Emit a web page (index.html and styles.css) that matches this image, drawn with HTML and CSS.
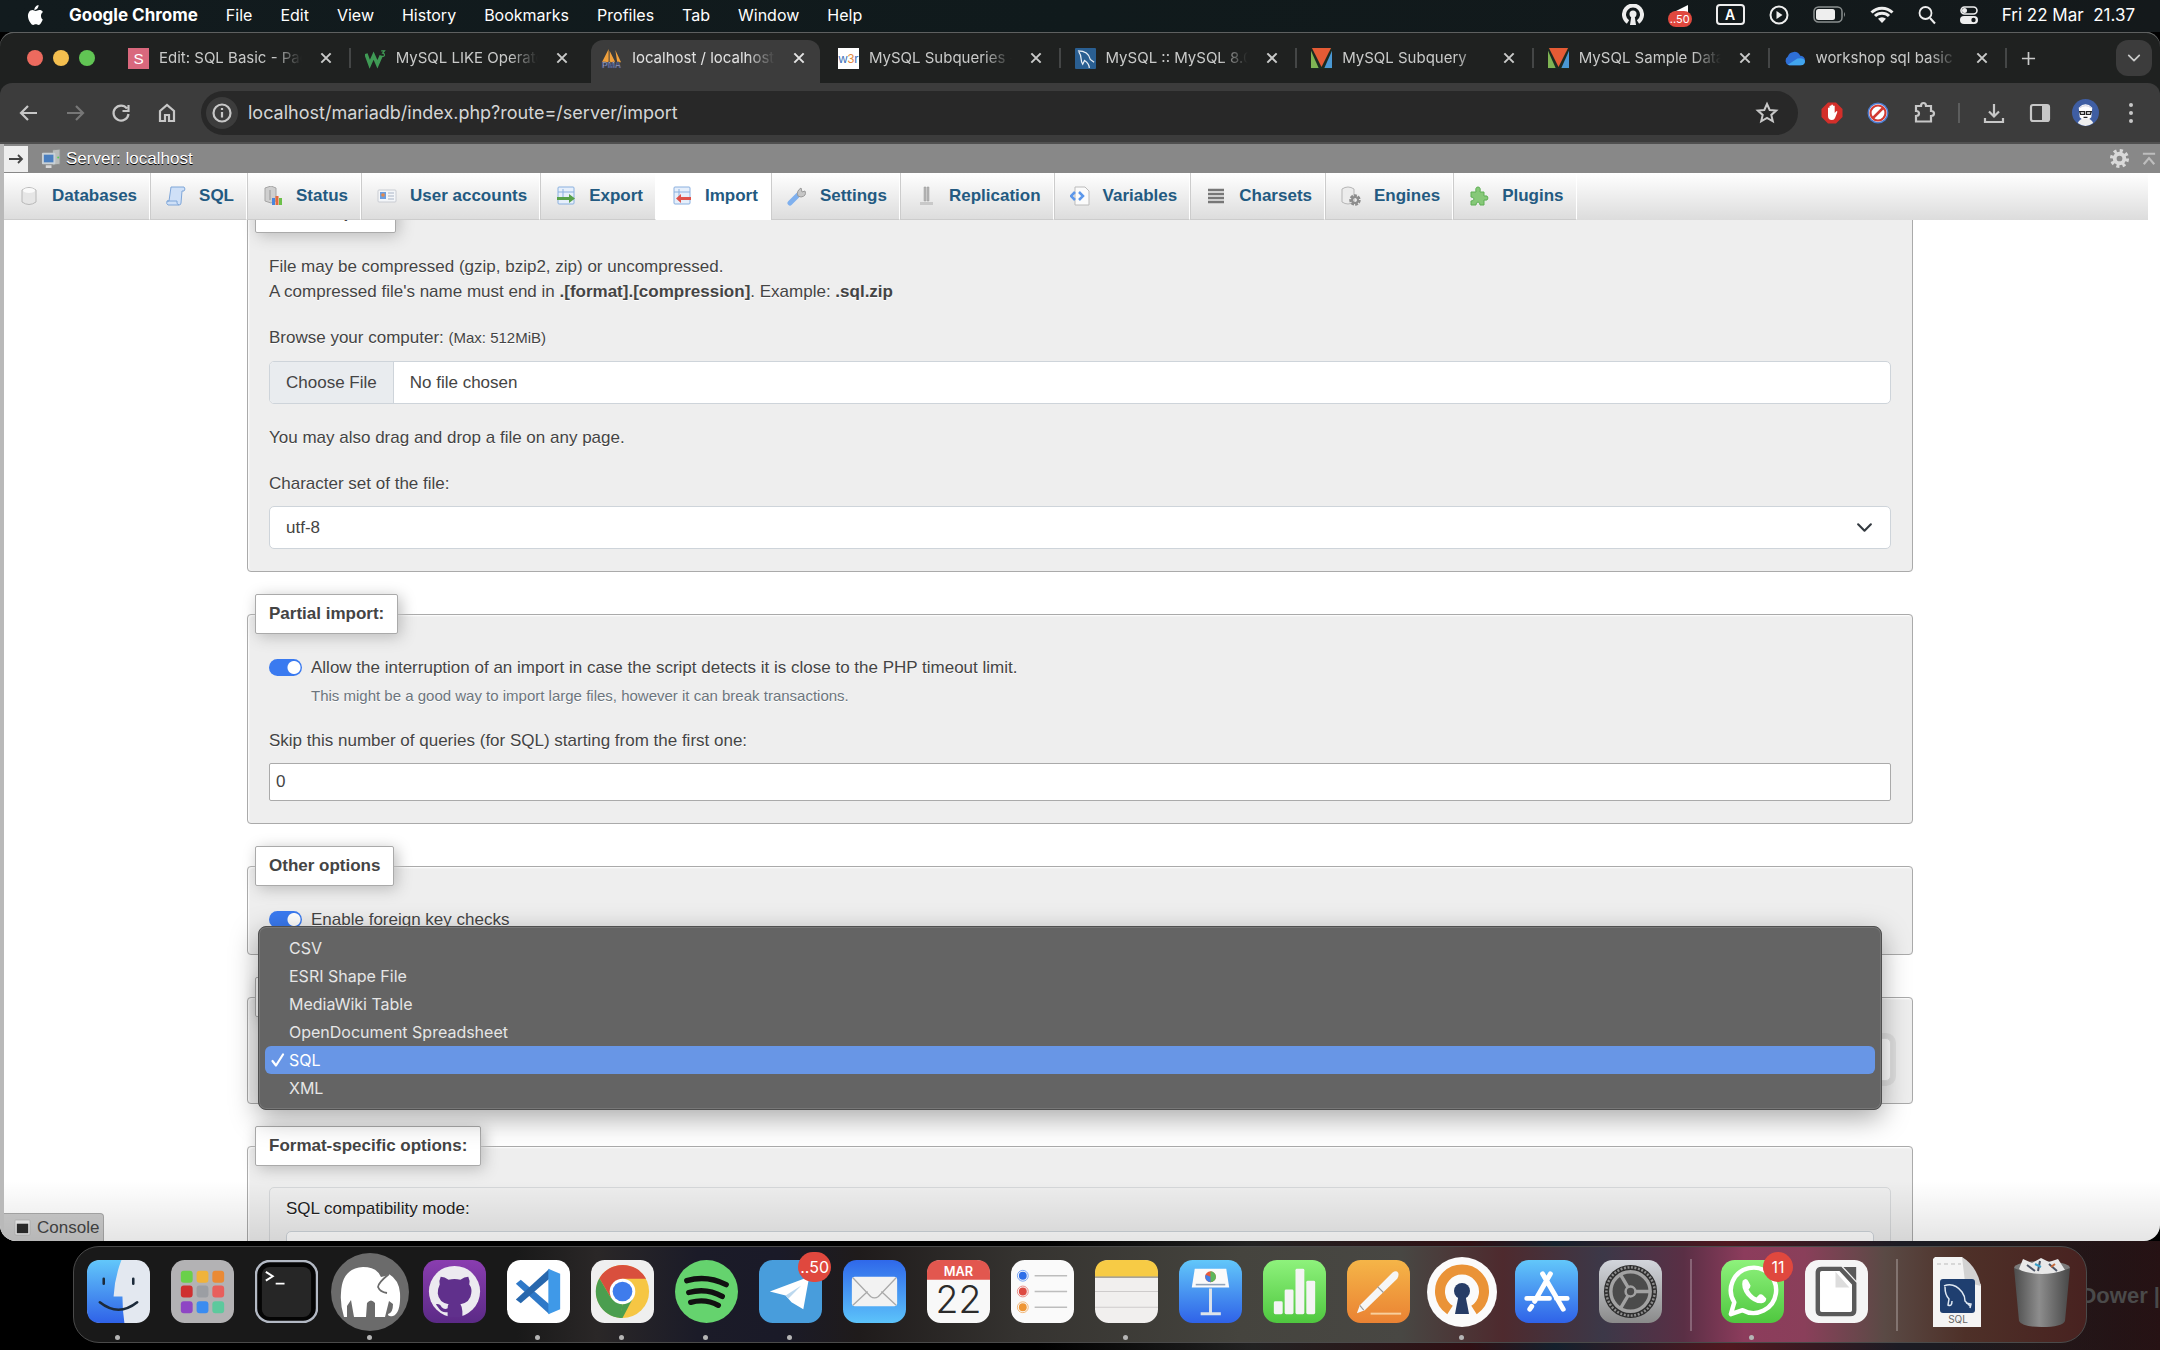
FILE: index.html
```html
<!DOCTYPE html>
<html lang="en">
<head>
<meta charset="utf-8">
<title>localhost / localhost | phpMyAdmin</title>
<link rel="stylesheet" href="styles.css">
</head>
<body>
<svg class="defs" aria-hidden="true">
  <defs>
    <symbol id="i-close" viewBox="0 0 12 12"><path d="M2 2l8 8M10 2l-8 8" stroke="currentColor" stroke-width="1.7" fill="none"/></symbol>
    <symbol id="i-tri" viewBox="0 0 22 22"><rect width="22" height="22" fill="#1c2a20"/><path d="M0 3l8 18H0z" fill="#7fb454"/><path d="M22 3v18h-8z" fill="#4a98d3"/><path d="M1 0h20l-10 20z" fill="#e55b35"/></symbol>
    <symbol id="i-chev" viewBox="0 0 16 16"><path d="M2 5l6 6 6-6" stroke="currentColor" stroke-width="2" fill="none" stroke-linecap="round" stroke-linejoin="round"/></symbol>
    <linearGradient id="g-blue" x2="0" y2="1"><stop stop-color="#62c7fa"/><stop offset="1" stop-color="#2f62e8"/></linearGradient>
    <linearGradient id="g-mail" x2="0" y2="1"><stop stop-color="#2f68ea"/><stop offset="1" stop-color="#5cc3fa"/></linearGradient>
    <linearGradient id="g-grey" x2="0" y2="1"><stop stop-color="#d3d6dc"/><stop offset="1" stop-color="#8a8a8a"/></linearGradient>
    <linearGradient id="g-green" x2="0" y2="1"><stop stop-color="#8ef27c"/><stop offset="1" stop-color="#4fc73f"/></linearGradient>
    <linearGradient id="g-orange" x2="0" y2="1"><stop stop-color="#f5b548"/><stop offset="1" stop-color="#ea8233"/></linearGradient>
    <linearGradient id="g-purple" x2="0" y2="1"><stop stop-color="#8a3db0"/><stop offset="1" stop-color="#5b2a86"/></linearGradient>
    <linearGradient id="g-trash" x2="1" y2="0"><stop stop-color="#4c4c4c"/><stop offset=".45" stop-color="#8d8d8d"/><stop offset="1" stop-color="#474747"/></linearGradient>
  </defs>
</svg>

<header class="menubar">
  <svg class="apple" viewBox="0 0 16 20"><path fill="#fff" d="M11 0c.2 1.400-.4 2.600-1.100 3.500-.8.900-1.900 1.500-3 1.400C6.800 3.600 7.400 2.500 8.100 1.700 8.900.800 10.100.100 11 0zM15.300 14.600c-.5 1.300-1.100 2.300-1.800 3.300-.7 1-1.500 2-2.600 2-1 0-1.400-.6-2.600-.6s-1.600.6-2.600.6c-1.100 0-1.900-1-2.600-2C.900 15.400-.6 10.400 1.300 7.400c.9-1.500 2.300-2.300 3.700-2.300 1.300 0 2.300.8 3.300.8.900 0 2.100-.9 3.700-.8.700 0 2.400.3 3.500 1.900-2.900 1.700-2.400 6.100-.2 7.600z"/></svg>
  <nav class="menus">
    <a href="#" class="app">Google Chrome</a><a href="#">File</a><a href="#">Edit</a><a href="#">View</a><a href="#">History</a><a href="#">Bookmarks</a><a href="#">Profiles</a><a href="#">Tab</a><a href="#">Window</a><a href="#">Help</a>
  </nav>
  <div class="status">
    <svg width="22" height="22" viewBox="0 0 22 22"><path d="M6 18a9 9 0 1 1 10 0" stroke="#eee" stroke-width="4" fill="none"/><circle cx="11" cy="10" r="3.500" fill="#eee"/><path d="M9.500 11h3l1.500 10H8z" fill="#eee"/></svg>
    <span class="tele"><svg width="24" height="24" viewBox="0 0 24 24"><path d="M2 11L20 2v12z" fill="#fff"/></svg><b>..50</b></span>
    <span class="inputsrc">A</span>
    <svg width="20" height="20" viewBox="0 0 20 20"><circle cx="10" cy="10" r="8.500" stroke="#eee" stroke-width="2" fill="none"/><path d="M7.500 6l6 4-6 4z" fill="#eee"/></svg>
    <svg width="33" height="18" viewBox="0 0 33 18"><rect x="1" y="1" width="28" height="15" rx="4.500" stroke="#8b9090" stroke-width="1.500" fill="none"/><rect x="3" y="3" width="19" height="11" rx="2.500" fill="#eee"/><path d="M31 6v5q2-2.500 0-5z" fill="#8b9090"/></svg>
    <svg width="24" height="18" viewBox="0 0 24 18"><path d="M1.500 6.500a15 15 0 0 1 21 0M5 10a10 10 0 0 1 14 0" stroke="#eee" stroke-width="3" fill="none"/><path d="M12 17l-4-4.300a6 6 0 0 1 8 0z" fill="#eee"/></svg>
    <svg width="18" height="20" viewBox="0 0 18 20"><circle cx="7.500" cy="8" r="6" stroke="#eee" stroke-width="1.800" fill="none"/><path d="M12 13l5 5.500" stroke="#eee" stroke-width="2"/></svg>
    <svg width="18" height="18" viewBox="0 0 18 18"><rect x="1" y="1" width="16" height="7" rx="3.500" fill="none" stroke="#eee" stroke-width="1.600"/><circle cx="4.500" cy="4.500" r="2.500" fill="#eee"/><rect y="10" width="18" height="8" rx="4" fill="#eee"/><circle cx="13.500" cy="14" r="2.200" fill="#14191b"/></svg>
    <time>Fri 22 Mar&nbsp; 21.37</time>
  </div>
</header>

<div class="window">
  <div class="tabstrip">
    <div class="lights"><i class="red"></i><i class="yellow"></i><i class="green"></i></div>
    <div class="tabs">
      <div class="tab"><svg viewBox="0 0 22 22"><rect width="22" height="22" fill="#d9687d"/><text x="11" y="17" text-anchor="middle" font-size="16" fill="#fff">S</text></svg><span>Edit: SQL Basic - Pages</span><button aria-label="Close"><svg><use href="#i-close"/></svg></button></div>
      <div class="tab nosep"><svg viewBox="0 0 22 22"><path d="M1 6l4 11 4-9 4 9 4-9" fill="none" stroke="#3f9a55" stroke-width="3.600"/><path d="M17 3h3.500l-2 2.300q2 .2 2 2t-3.500 1.400" fill="none" stroke="#3f9a55" stroke-width="1.200"/></svg><span>MySQL LIKE Operator</span><button aria-label="Close"><svg><use href="#i-close"/></svg></button></div>
      <div class="tab active"><svg viewBox="0 0 22 22"><path d="M8 1v14H1zM9 3l6 12H9zM15 2l6 13h-4z" fill="#f0a03c"/><text x="11" y="21" text-anchor="middle" font-size="9" font-weight="700" fill="#dfe3f4" stroke="#35406b" stroke-width=".7">PMA</text></svg><span>localhost / localhost</span><button aria-label="Close"><svg><use href="#i-close"/></svg></button></div>
      <div class="tab"><svg viewBox="0 0 22 22"><rect width="22" height="22" fill="#fff"/><text x="11" y="16" text-anchor="middle" font-size="13" fill="#3d71b8">w<tspan fill="#e58a3c">3</tspan>r</text></svg><span>MySQL Subqueries -</span><button aria-label="Close"><svg><use href="#i-close"/></svg></button></div>
      <div class="tab"><svg viewBox="0 0 22 22"><rect width="22" height="22" rx="1" fill="#2a5f92"/><path d="M3 3c8 0 12 4 13 9l4 3M4 4c4 5 1 9 4 13l2-4c3 2 5 5 5 8" fill="none" stroke="#e8eef5" stroke-width="1.300"/></svg><span>MySQL :: MySQL 8.0 Ref</span><button aria-label="Close"><svg><use href="#i-close"/></svg></button></div>
      <div class="tab"><svg><use href="#i-tri"/></svg><span>MySQL Subquery</span><button aria-label="Close"><svg><use href="#i-close"/></svg></button></div>
      <div class="tab"><svg><use href="#i-tri"/></svg><span>MySQL Sample Database</span><button aria-label="Close"><svg><use href="#i-close"/></svg></button></div>
      <div class="tab"><svg viewBox="0 0 22 22"><path d="M5 18a5 5 0 0 1-1-9 7 7 0 0 1 13-1 5 5 0 0 1 0 10z" fill="#2e6fd6"/><path d="M4 17.500L14 11q8-1 8 3.500a4 4 0 0 1-4 3.500H6z" fill="#41a5ee"/></svg><span>workshop sql basic -</span><button aria-label="Close"><svg><use href="#i-close"/></svg></button></div>
    </div>
    <button class="newtab" aria-label="New tab"><svg viewBox="0 0 16 16"><path d="M8 1v14M1 8h14" stroke="currentColor" stroke-width="1.800"/></svg></button>
    <button class="tabsearch" aria-label="Search tabs"><svg><use href="#i-chev"/></svg></button>
  </div>

  <div class="toolbar">
    <button aria-label="Back"><svg viewBox="0 0 24 24"><path d="M20 12H5M11 5l-7 7 7 7" class="ln"/></svg></button>
    <button aria-label="Forward" class="dim"><svg viewBox="0 0 24 24"><path d="M4 12h15M13 5l7 7-7 7" class="ln"/></svg></button>
    <button aria-label="Reload"><svg viewBox="0 0 24 24"><path d="M18 7.500A7.500 7.500 0 1 0 19.500 13M19.500 4v6h-6" class="ln"/></svg></button>
    <button aria-label="Home"><svg viewBox="0 0 24 24"><path d="M5 10l7-6 7 6v10h-5v-6h-4v6H5z" class="ln"/></svg></button>
    <div class="omnibox">
      <span class="info"><svg viewBox="0 0 24 24"><circle cx="12" cy="12" r="8.500" class="ln"/><path d="M12 11v5.500M12 7v2" class="ln"/></svg></span>
      <input type="text" aria-label="Address" value="localhost/mariadb/index.php?route=/server/import">
      <svg viewBox="0 0 24 24"><path d="M12 3l2.700 6 6.500.6-4.900 4.300 1.500 6.400-5.800-3.400-5.800 3.400 1.500-6.400L2.800 9.600l6.500-.6z" class="ln thin"/></svg>
    </div>
    <button aria-label="Blocker"><svg viewBox="0 0 24 24"><path d="M8 1.500h8L22.500 8v8L16 22.500H8L1.500 16V8z" fill="#d32f2a"/><path d="M8 12V7q1-1 1.500 0V5q1-1 1.700 0V4q1-1 1.800 0v1q1-1 1.700 0v7l1.800-2q1.500 0 .5 2l-2 5q-.6 2-3 2-4 0-4-4z" fill="#fff"/></svg></button>
    <button aria-label="Ad filter"><svg viewBox="0 0 24 24"><circle cx="12" cy="12" r="10.500" fill="#4c7bd0"/><circle cx="12" cy="12" r="9" fill="#fff"/><circle cx="12" cy="12" r="7.500" fill="none" stroke="#d13a33" stroke-width="2.200"/><path d="M7 17L17 7" stroke="#d13a33" stroke-width="2.500"/></svg></button>
    <button aria-label="Extensions"><svg viewBox="0 0 24 24"><path d="M4 5h5q0-3 2.500-3T14 5h5v5q3 0 3 2.500T19 15v5.500H4V15q3 0 3-2.500T4 10z" class="ln"/></svg></button>
    <i class="rule"></i>
    <button aria-label="Downloads"><svg viewBox="0 0 24 24"><path d="M12 3v12M7 10.500l5 5 5-5M3 17v4h18v-4" class="ln"/></svg></button>
    <button aria-label="Side panel"><svg viewBox="0 0 24 24"><rect x="3" y="4" width="18" height="16" rx="2" class="ln"/><path d="M14 4h7v16h-7z" fill="currentColor"/></svg></button>
    <button aria-label="Profile"><svg class="avatar" viewBox="0 0 28 28"><circle cx="14" cy="14" r="14" fill="#3f5ea3"/><path d="M7 9q7-7 14 0l-1 10q-6 7-12 0z" fill="#fff"/><path d="M8 9q6-4 12 0" stroke="#ccd" fill="none"/><path d="M8 13h5v3H9zM15 13h5l-1 3h-4zM12 19h4" stroke="#222" stroke-width="1.300" fill="none"/><path d="M6 25q2-5 8-5t8 5q-8 6-16 0z" fill="#eee"/></svg></button>
    <button aria-label="Menu"><svg viewBox="0 0 24 24" fill="currentColor"><circle cx="12" cy="4" r="2"/><circle cx="12" cy="12" r="2"/><circle cx="12" cy="20" r="2"/></svg></button>
  </div>

  <div class="page">
    <div class="server">
      <button class="expand" aria-label="Show panel"><svg viewBox="0 0 16 12"><path d="M1 6h13M10 2l4 4-4 4" fill="none" stroke="#444" stroke-width="1.800"/></svg></button>
      <svg viewBox="0 0 22 22"><path d="M12 2l8-1v16l-8 1z" fill="#b9bcbb" stroke="#8a8d8c"/><rect x="1" y="5" width="14" height="12" rx="1" fill="#c9d1d6"/><rect x="3" y="7" width="10" height="8" fill="#4a7fc0"/><path d="M5 18h6v3H5z" fill="#d8d8d8"/><circle cx="18" cy="10" r="1" fill="#5c5"/></svg>
      <a href="#">Server: localhost</a>
      <svg class="gear" viewBox="0 0 22 22"><circle cx="11" cy="11" r="8" fill="none" stroke="#d9d9d9" stroke-width="4" stroke-dasharray="3.140 3.140"/><circle cx="11" cy="11" r="5" fill="none" stroke="#d9d9d9" stroke-width="4"/></svg>
      <svg class="totop" viewBox="0 0 16 16"><path d="M1 2h14M2 14l6-7 6 7" fill="none" stroke="#bdbdbd" stroke-width="2.500"/></svg>
    </div>
    <nav class="pmatabs">
      <a href="#"><svg viewBox="0 0 20 20"><path d="M3 4q7-5 14 0v12q-7 5-14 0z" fill="#e6e6e6" stroke="#b8b8b8"/><ellipse cx="10" cy="4.500" rx="6" ry="2.500" fill="#fafafa"/></svg>Databases</a>
      <a href="#"><svg viewBox="0 0 20 20"><path d="M5 1h13q2 2 0 4h-2l-1 12q0 2-2 2H2q-2-1-1-4h2z" fill="#cfe0f7" stroke="#7fa6d8"/><path d="M1 15h10q-1 3 2 4" fill="none" stroke="#7fa6d8"/></svg>SQL</a>
      <a href="#"><svg viewBox="0 0 20 20"><path d="M2 2l6-2 5 2v13l-5 2-6-2z" fill="#cfcfcf" stroke="#a5a5a5"/><path d="M7 4v10" stroke="#999"/><path d="M9 12h3v7H9z" fill="#4a86dd"/><path d="M12.500 10h3v9h-3z" fill="#e56a3c"/><path d="M16 12h3v7h-3z" fill="#6cc04a"/></svg>Status</a>
      <a href="#"><svg viewBox="0 0 20 20"><rect x="1" y="4" width="18" height="12" rx="1" fill="#f4f6f9" stroke="#c9ccd2"/><rect x="3" y="6" width="6" height="7" fill="#6c9ee0"/><circle cx="6" cy="9" r="1.800" fill="#e58a4c"/><path d="M11 7h6M11 10h6M11 13h6" stroke="#a9b4c6"/></svg>User accounts</a>
      <a href="#"><svg viewBox="0 0 20 20"><rect x="2" y="1" width="16" height="17" rx="1" fill="#e6effb" stroke="#8ab0df"/><path d="M2 6h16M7 3v8" stroke="#8ab0df"/><path d="M1 11h12V8l6 4.500-6 4.500v-3H1z" fill="#58a24a"/></svg>Export</a>
      <a href="#" class="on"><svg viewBox="0 0 20 20"><rect x="2" y="1" width="16" height="17" rx="1" fill="#e6effb" stroke="#8ab0df"/><path d="M2 6h16M7 3v8" stroke="#8ab0df"/><path d="M19 11H9V8l-5 4.500L9 17v-3h10z" fill="#e0524a"/></svg>Import</a>
      <a href="#"><svg viewBox="0 0 20 20"><path d="M3 17L11 9" stroke="#7fb0ee" stroke-width="5" stroke-linecap="round"/><path d="M11 10q-2-5 3-8l1 4 3-1q2 5-4 6z" fill="#c6c6c6" stroke="#999"/></svg>Settings</a>
      <a href="#"><svg viewBox="0 0 20 20"><path d="M8 1h2v14H8zM11 1h2v14h-2z" fill="#b7b7b7" stroke="#9a9a9a" stroke-width=".5"/><path d="M4 16h13v3H4z" fill="#c9c9c9"/></svg>Replication</a>
      <a href="#"><svg viewBox="0 0 20 20"><path d="M5 1h10l4 4v14H5z" fill="#fbfbfb" stroke="#bbb"/><path d="M5 6l-4 4 4 4M9 6l4 4-4 4" stroke="#5c97ea" stroke-width="2.500" fill="none"/></svg>Variables</a>
      <a href="#"><svg viewBox="0 0 20 20"><path d="M2 4h16M2 8h16M2 12h16M2 16h16" stroke="#777" stroke-width="2.600"/></svg>Charsets</a>
      <a href="#"><svg viewBox="0 0 20 20"><path d="M1 3q6-4 12 0v13q-6 4-12 0z" fill="#ececec" stroke="#b5b5b5"/><circle cx="14" cy="14" r="4" fill="none" stroke="#8d8d8d" stroke-width="3.500" stroke-dasharray="2.500 1"/><circle cx="14" cy="14" r="3" fill="none" stroke="#8d8d8d" stroke-width="2"/></svg>Engines</a>
      <a href="#"><svg viewBox="0 0 20 20"><path d="M2 6h5q-1-5 2-5t2 5h4v4q4-1 4 2t-4 2v5h-4q0-3-2-3t-2 3H2v-4q3 0 3-2t-3-2z" fill="#86c878" stroke="#5faf55"/></svg>Plugins</a>
    </nav>

    <main>
      <form class="content">
        <fieldset class="card">
          <legend>File to import:</legend>
          <p>File may be compressed (gzip, bzip2, zip) or uncompressed.<br>A compressed file's name must end in <b>.[format].[compression]</b>. Example: <b>.sql.zip</b></p>
          <label for="file">Browse your computer: <small>(Max: 512MiB)</small></label>
          <input type="file" id="file" class="box">
          <p>You may also drag and drop a file on any page.</p>
          <label for="charset">Character set of the file:</label>
          <div class="selectwrap"><select id="charset" class="box"><option>utf-8</option></select><svg><use href="#i-chev"/></svg></div>
        </fieldset>
        <fieldset class="card">
          <legend>Partial import:</legend>
          <div class="switch"><input type="checkbox" id="interrupt" checked><label for="interrupt">Allow the interruption of an import in case the script detects it is close to the PHP timeout limit.</label></div>
          <div class="help">This might be a good way to import large files, however it can break transactions.</div>
          <label for="skip">Skip this number of queries (for SQL) starting from the first one:</label>
          <input type="text" id="skip" class="number" value="0">
        </fieldset>
        <fieldset class="card">
          <legend>Other options</legend>
          <div class="switch"><input type="checkbox" id="fk" checked><label for="fk">Enable foreign key checks</label></div>
        </fieldset>
        <fieldset class="card format">
          <legend>Format:</legend>
          <select class="box focus" aria-label="Format"><option>SQL</option></select>
          <ul class="popup" role="listbox" aria-label="Format">
            <li role="option">CSV</li>
            <li role="option">ESRI Shape File</li>
            <li role="option">MediaWiki Table</li>
            <li role="option">OpenDocument Spreadsheet</li>
            <li role="option" aria-selected="true"><svg viewBox="0 0 14 14"><path d="M1.500 8l3.500 4.500L12 1.500" fill="none" stroke="#fff" stroke-width="2.200" stroke-linecap="round" stroke-linejoin="round"/></svg>SQL</li>
            <li role="option">XML</li>
          </ul>
        </fieldset>
        <fieldset class="card">
          <legend>Format-specific options:</legend>
          <div class="inner">
            <label for="compat">SQL compatibility mode:</label>
            <select id="compat" class="box"><option>NONE</option></select>
          </div>
        </fieldset>
      </form>
      <button class="console"><svg viewBox="0 0 18 18"><rect x="1" y="1" width="16" height="16" rx="1" fill="#eee" stroke="#bbb"/><rect x="3" y="5" width="12" height="10" fill="#2c2c2c"/></svg>Console</button>
    </main>
  </div>
</div>

<footer class="desktop">
  <span class="wall">Dower |</span>
  <div class="dock">
    <a href="#" class="run" aria-label="Finder"><svg viewBox="0 0 64 64"><rect width="64" height="64" rx="14" fill="#e3e8f0"/><path d="M14 0h21q-7 18-8 37h9q0 14 2 27H14Q0 64 0 50V14Q0 0 14 0z" fill="url(#g-blue)"/><path d="M17 19v5M47 19v5M13 43q19 15 38 0" stroke="#1c2a3a" stroke-width="2.600" fill="none" stroke-linecap="round"/></svg></a>
    <a href="#" aria-label="Launchpad"><svg viewBox="0 0 64 64"><rect width="64" height="64" rx="14" fill="#b3b2b4"/><rect x="10" y="11" width="12" height="12" rx="3" fill="#6ad04a"/><rect x="26" y="11" width="12" height="12" rx="3" fill="#f0b33a"/><rect x="42" y="11" width="12" height="12" rx="3" fill="#ea8a35"/><rect x="10" y="26" width="12" height="12" rx="3" fill="#cf3030"/><rect x="26" y="26" width="12" height="12" rx="3" fill="#9b9ea3"/><rect x="42" y="26" width="12" height="12" rx="3" fill="#e85f5c"/><rect x="10" y="42" width="12" height="12" rx="3" fill="#8e46c4"/><rect x="26" y="42" width="12" height="12" rx="3" fill="#3a8cf0"/><rect x="42" y="42" width="12" height="12" rx="3" fill="#5dc99d"/></svg></a>
    <a href="#" aria-label="Terminal"><svg viewBox="0 0 64 64"><rect x="1" y="1" width="62" height="62" rx="14" fill="#050505" stroke="#b3b9c4" stroke-width="2.500"/><rect x="7" y="7" width="50" height="51" rx="8" fill="#262626"/><path d="M11 12l7 4.500-7 4.500M21 24h9" stroke="#fff" stroke-width="2" fill="none"/></svg></a>
    <a href="#" class="run round" aria-label="TablePlus"><svg viewBox="0 0 78 78"><circle cx="39" cy="39" r="39" fill="#6b6b6b"/><path d="M10 40Q11 15 32 14q14 0 18 10 4 0 8-3 10 6 11 19 1 20-7 23-5 1-5-2 5-1 5-10l-4-3-4 16H44V50q-4-5-8 0l-1 14H23l-3-17-4 6v11h-3Q9 52 10 40z" fill="#fff"/><path d="M58 21q-11 9-11 13 2 5 9 6" fill="none" stroke="#6b6b6b" stroke-width="1.800"/></svg></a>
    <a href="#" aria-label="GitHub Desktop"><svg viewBox="0 0 64 64"><rect width="64" height="64" rx="14" fill="url(#g-purple)"/><circle cx="32" cy="32" r="26" fill="#eceaf0"/><path d="M18 17q4 0 8 3 6-1.500 12 0 4-3 8-3 2 4 1 8 3 4 2 9-1 9-11 11 2 3 2 7v6H25v-5q-6 1-9-4l-3-4q4-1 6 3 3 3 6 1 0-3 1-4-10-2-11-11 0-5 2-9-1-4 1-8z" fill="#60308c"/></svg></a>
    <a href="#" class="run" aria-label="Visual Studio Code"><svg viewBox="0 0 64 64"><rect width="64" height="64" rx="14" fill="#fff"/><path d="M9 24l5-4 29 25v10z" fill="#2f79c8"/><path d="M9 40l5 4 29-25V9z" fill="#2767ad"/><path d="M42 9l12 5v36l-12 5z" fill="#3f99e8"/></svg></a>
    <a href="#" class="run" aria-label="Google Chrome"><svg viewBox="0 0 64 64"><rect width="64" height="64" rx="14" fill="#efefef"/><circle cx="32" cy="32" r="27" fill="#f6c644"/><path d="M32 5a27 27 0 0 1 24 14H32L20 38 8.500 18.500A27 27 0 0 1 32 5z" fill="#d94f3d"/><path d="M8.500 18.500L20 38l12 7-2 14A27 27 0 0 1 8.500 18.500z" fill="#4b9e4f"/><path d="M32 45l11-7-11 21h-3z" fill="#4b9e4f"/><circle cx="32" cy="32" r="13" fill="#fff"/><circle cx="32" cy="32" r="10" fill="#3f7cec"/></svg></a>
    <a href="#" class="run" aria-label="Spotify"><svg viewBox="0 0 64 64"><circle cx="32" cy="32" r="32" fill="#65d36e"/><path d="M12 21q20-6 40 4M14 33q18-5 34 4M16 43q15-4 28 3" stroke="#111" stroke-width="5.500" fill="none" stroke-linecap="round"/></svg></a>
    <a href="#" class="run" aria-label="Telegram"><svg viewBox="0 0 64 64"><rect width="64" height="64" rx="14" fill="#489ddc"/><path d="M11 32L51 17 45 50 33 43 27 36z" fill="#fff"/><path d="M27 36l16-10-13 13" fill="#bcd8ee"/></svg><b>..50</b></a>
    <a href="#" aria-label="Mail"><svg viewBox="0 0 64 64"><rect width="64" height="64" rx="14" fill="url(#g-mail)"/><rect x="9" y="17" width="46" height="30" rx="3" fill="#f2f2f2"/><path d="M10 18l18 19q4 3 8 0l18-19M10 46l15-14M54 46L39 32" stroke="#a9a9a9" stroke-width="1.300" fill="none"/></svg></a>
    <a href="#" aria-label="Calendar"><svg viewBox="0 0 64 64"><rect width="64" height="64" rx="14" fill="#f8f8f8"/><path d="M0 20v-6Q0 0 14 0h36q14 0 14 14v6z" fill="#e2574f"/><text x="32" y="16" text-anchor="middle" font-size="13" font-weight="600" fill="#fff">MAR</text><text x="32" y="54" text-anchor="middle" font-size="38" font-weight="300" fill="#2b2b2b">22</text></svg></a>
    <a href="#" aria-label="Reminders"><svg viewBox="0 0 64 64"><rect width="64" height="64" rx="14" fill="#fafafa"/><circle cx="12" cy="16" r="4" fill="#2f6fe8"/><circle cx="12" cy="32" r="4" fill="#dd4a42"/><circle cx="12" cy="48" r="4" fill="#ee9636"/><circle cx="12" cy="16" r="5.500" fill="none" stroke="#7ba5f2"/><circle cx="12" cy="32" r="5.500" fill="none" stroke="#ea8a84"/><circle cx="12" cy="48" r="5.500" fill="none" stroke="#f2b87a"/><path d="M24 16h33M24 32h33M24 48h33" stroke="#bdbdbd" stroke-width="1.300"/></svg></a>
    <a href="#" class="run" aria-label="Notes"><svg viewBox="0 0 64 64"><rect width="64" height="64" rx="14" fill="#f1efee"/><path d="M0 17v-3Q0 0 14 0h36q14 0 14 14v3z" fill="#f7cb45"/><path d="M0 17.500h64" stroke="#8f8b7e" stroke-width="1.300"/><path d="M0 32h64M0 48h64" stroke="#cdcaca"/></svg></a>
    <a href="#" aria-label="Keynote"><svg viewBox="0 0 64 64"><rect width="64" height="64" rx="14" fill="url(#g-blue)"/><path d="M16 9h32l3 19H13z" fill="#fafafa"/><path d="M17 25h30" stroke="#8fa3bb" stroke-width="1.600"/><circle cx="32" cy="17" r="5.500" fill="#e5593c"/><path d="M32 17V11.500a5.500 5.500 0 0 1 0 11z" fill="#5bb75b"/><path d="M32 17v5.500A5.500 5.500 0 0 1 27 15z" fill="#3f7fe8"/><path d="M30.500 29h3v24h9v3H22v-3h8.500z" fill="#dde3ea"/></svg></a>
    <a href="#" aria-label="Numbers"><svg viewBox="0 0 64 64"><rect width="64" height="64" rx="14" fill="url(#g-green)"/><rect x="11" y="42" width="9" height="13" rx="1.500" fill="#f4f4f4"/><rect x="22" y="30" width="9" height="25" rx="1.500" fill="#f4f4f4"/><rect x="33" y="9" width="9" height="46" rx="1.500" fill="#f4f4f4"/><rect x="44" y="21" width="9" height="34" rx="1.500" fill="#f4f4f4"/></svg></a>
    <a href="#" aria-label="Pages"><svg viewBox="0 0 64 64"><rect width="64" height="64" rx="14" fill="url(#g-orange)"/><path d="M24 54.500h31" stroke="#f8cf9c" stroke-width="2"/><path d="M10 54l3-8 33-33q4-3 6 0 1 3-1 6L18 51z" fill="#f6f6f6"/><path d="M31 27l6 6M13 46l4 5" stroke="#999" stroke-width="1.200"/></svg></a>
    <a href="#" class="run big" aria-label="OpenVPN"><svg viewBox="0 0 70 70"><circle cx="35" cy="35" r="35" fill="#fbfbfb"/><path d="M23 53a22 22 0 1 1 24 0" fill="none" stroke="#ea9337" stroke-width="10"/><circle cx="35" cy="34" r="8" fill="#263c66"/><path d="M32 36h6l4 21H28z" fill="#263c66"/></svg></a>
    <a href="#" aria-label="App Store"><svg viewBox="0 0 64 64"><rect width="64" height="64" rx="14" fill="url(#g-blue)"/><path d="M36 14L20 42M28 14l21 36M12 39h23M42 39h11M17 47l-2 3" stroke="#fff" stroke-width="5" fill="none" stroke-linecap="round"/></svg></a>
    <a href="#" aria-label="System Settings"><svg viewBox="0 0 64 64"><rect width="64" height="64" rx="14" fill="url(#g-grey)"/><circle cx="32" cy="32" r="27" fill="#2e2e2e"/><circle cx="32" cy="32" r="24.500" fill="none" stroke="#8d8d8d" stroke-width="2.500" stroke-dasharray="2 1.600"/><circle cx="32" cy="32" r="20" fill="#4b4b4b" stroke="#a2a2a2" stroke-width="3.500"/><path d="M32 32h19M32 32l-10-17M32 32l-10 17" stroke="#a2a2a2" stroke-width="3.500"/><circle cx="32" cy="32" r="5" fill="#4b4b4b" stroke="#a2a2a2" stroke-width="2.500"/></svg></a>
    <i class="sep"></i>
    <a href="#" class="run" aria-label="WhatsApp"><svg viewBox="0 0 64 64"><rect width="64" height="64" rx="14" fill="url(#g-green)"/><path d="M10 55l3.500-12A23 23 0 1 1 22 51z" fill="none" stroke="#fff" stroke-width="4.500" stroke-linejoin="round"/><path d="M22 21q4-4 6 1l2 4q0 2-2 4 3 6 8 8l3-3q2-1 4 1l3 3q0 4-5 5-8 0-15-8-6-8-4-15z" fill="#fff"/></svg><b>11</b></a>
    <a href="#" aria-label="LibreOffice"><svg viewBox="0 0 64 64"><rect width="64" height="64" rx="14" fill="#f5f5f5"/><path d="M17 9h19l14 15v27q0 4-4 4H17q-4 0-4-4V13q0-4 4-4z" fill="#fff" stroke="#5a5a5a" stroke-width="4.500"/><path d="M39 7h13v14z" fill="#5a5a5a"/><path d="M31 12l14 16H31z" fill="#ddd"/></svg></a>
    <i class="sep"></i>
    <a href="#" class="big" aria-label="SQL file"><svg viewBox="0 0 70 70"><path d="M12 0h27l19 28v42H10V2z" fill="#f4f4f4"/><path d="M39 0l3 25 16 4q-4-20-19-29z" fill="#d2d2d2"/><path d="M14 7h24" stroke="#bbb" stroke-dasharray="4 3"/><rect x="17" y="22" width="35" height="34" rx="3" fill="#1f3f70"/><path d="M21 29q10-4 18 6 3 4 3 9l5 5M22 30q0 8 4 12l-1 6q4 2 4-4M43 46l5 1-1 4" stroke="#dfe8f2" stroke-width="1.500" fill="none"/><text x="35" y="66" text-anchor="middle" font-size="10" fill="#666">SQL</text></svg></a>
    <a href="#" class="big" aria-label="Trash"><svg viewBox="0 0 70 70"><ellipse cx="35" cy="11" rx="28" ry="7" fill="#7a7a7a"/><path d="M12 12L16 2l9 4 9-5 8 4 9-3 7 11-10 5H20z" fill="#e8e8e8"/><path d="M20 8l8 6M33 4l-2 10M42 7l8 7" stroke="#4c5566" stroke-width="2"/><path d="M28 7l6 3" stroke="#3ba0c9" stroke-width="2"/><path d="M44 10l4-3" stroke="#c46a3c" stroke-width="2"/><path d="M7 11q28 12 56 0l-5 53q-3 6-23 6t-23-6z" fill="url(#g-trash)"/></svg></a>
  </div>
</footer>
</body>
</html>
```
FILE: styles.css
```css
* { box-sizing: border-box; }
html, body { height: 100%; }
body {
  margin: 0;
  display: flex;
  flex-direction: column;
  overflow: hidden;
  background: #000;
  color: #444;
  font: 17px/25px "Liberation Sans", Arial, sans-serif;
}
a { color: inherit; text-decoration: none; }
button { border: 0; padding: 0; background: none; color: inherit; font: inherit; }
svg { display: block; flex: none; }
.defs { position: absolute; width: 0; height: 0; }
.ln { fill: none; stroke: currentColor; stroke-width: 2.2; }
.thin { stroke-width: 2; }

/* macOS menu bar */
.menubar {
  flex: none;
  height: 32px;
  display: flex;
  align-items: center;
  padding: 0 25px 3px 27px;
  background: linear-gradient(90deg, #121b1e, #101a1c 50%, #14191b);
  color: #fff;
  font: 16px/20px Inter, sans-serif;
}
.apple { width: 17px; height: 20px; margin-right: 25px; }
.menus { display: flex; gap: 28px; flex: 1; }
.app, time { font-size: 17px; }
.app { font-weight: 700; }
.status { display: flex; align-items: center; gap: 24px; }
.tele { position: relative; }
.tele b {
  position: absolute;
  top: 8px;
  left: 0;
  width: 24px;
  height: 16px;
  border-radius: 8px;
  background: #e0483e;
  font: 11px/16px Inter, sans-serif;
  text-align: center;
}
.inputsrc {
  width: 29px;
  height: 21px;
  border: 2px solid #eee;
  border-radius: 4px;
  font: 600 14px/17px Inter, sans-serif;
  text-align: center;
}

/* browser window */
.window {
  flex: 1;
  min-height: 0;
  display: flex;
  flex-direction: column;
  overflow: hidden;
  border-radius: 14px 14px 16px 16px;
  background: #1f2120;
  box-shadow: inset 0 1px 0 #6a6c6c;
}
.tabstrip {
  flex: none;
  height: 51px;
  display: flex;
  align-items: center;
  padding-right: 8px;
  border-top: 1px solid #5e6060;
  color: #c9cac9;
  font: 15px/20px Inter, sans-serif;
}
.lights { width: 114px; display: flex; gap: 10px; padding-left: 27px; }
.lights i { width: 16px; height: 16px; border-radius: 50%; }
.red { background: #ec6a5e; }
.yellow { background: #f4bf4f; }
.green { background: #61c554; }
.tabs { flex: 1; min-width: 0; height: 50px; display: flex; }
.tab {
  position: relative;
  flex: 1 1 0;
  min-width: 0;
  display: flex;
  align-items: center;
  padding: 0 18px 0 14px;
}
.tab > svg { width: 21px; height: 21px; margin-right: 10px; font-family: "Liberation Sans", sans-serif; }
.tab span {
  flex: 1;
  min-width: 0;
  overflow: hidden;
  white-space: nowrap;
  -webkit-mask-image: linear-gradient(90deg, #000 80%, transparent);
  mask-image: linear-gradient(90deg, #000 80%, transparent);
}
.tab button { margin-left: 17px; }
.tab button svg { width: 14px; height: 14px; }
.tab:not(.active):not(.nosep)::after {
  content: "";
  position: absolute;
  right: 0;
  top: 15px;
  width: 2px;
  height: 20px;
  background: #444646;
}
.active { color: #e3e3e3; }
.active::before {
  content: "";
  position: absolute;
  z-index: -1;
  inset: 7px 4px 0;
  border-radius: 12px 12px 0 0;
  background: #3c3c3c;
}
.tabs, .active { isolation: isolate; }
.newtab { width: 43px; display: grid; place-items: center; }
.newtab svg { width: 15px; height: 15px; }
.tabsearch {
  width: 36px;
  height: 36px;
  margin-left: 66px;
  display: grid;
  place-items: center;
  border-radius: 12px;
  background: #3c3c3c;
}
.tabsearch svg { width: 14px; height: 14px; }
.toolbar {
  flex: none;
  height: 61px;
  display: flex;
  align-items: center;
  gap: 22px;
  padding: 0 17px;
  border-bottom: 2px solid #505050;
  border-radius: 12px 12px 0 0;
  background: #3c3c3c;
  color: #c7c7c7;
}
.toolbar svg { width: 24px; height: 24px; }
.toolbar .avatar { width: 27px; height: 27px; margin: 0 -2px; }
.toolbar .dim { color: #777; }
.omnibox {
  flex: 1;
  height: 44px;
  display: flex;
  align-items: center;
  gap: 10px;
  padding: 0 19px 0 5px;
  border-radius: 22px;
  background: #282828;
}
.info { width: 32px; height: 32px; display: grid; place-items: center; border-radius: 50%; background: #3c3c3c; }
.omnibox input {
  flex: 1;
  border: 0;
  padding: 0;
  background: none;
  color: #d5d6d6;
  font: 18px/24px Inter, sans-serif;
}
.rule { width: 2px; height: 20px; background: #5c5d5d; }

/* phpMyAdmin */
.page {
  flex: 1;
  min-height: 0;
  display: flex;
  flex-direction: column;
  border-left: 4px solid #b9b9b9;
  background: #fff;
}
.server {
  flex: none;
  height: 29px;
  display: flex;
  align-items: center;
  background: #888;
  color: #fff;
  text-shadow: 0 1px 0 #000;
}
.expand { width: 24px; height: 26px; margin-right: 13px; display: grid; place-items: center; background: #eee; }
.expand svg { width: 16px; height: 12px; }
.server > svg { width: 21px; height: 21px; }
.server a { flex: 1; margin-left: 4px; }
.server .totop { width: 16px; height: 14px; margin-left: 11px; margin-right: 3px; }
.pmatabs {
  flex: none;
  height: 47px;
  margin-right: 12px;
  display: flex;
  background: linear-gradient(#fff, #dcdcdc);
  color: #235a81;
  font-weight: 700;
}
.pmatabs a {
  display: flex;
  align-items: center;
  gap: 13px;
  padding: 0 12px 1px 15px;
  border-right: 1px solid #fff;
  border-left: 1px solid #ccc;
  border-bottom: 1px solid #ccc;
}
.pmatabs a:first-child { border-left: 0; }
.pmatabs a.on { background: #fff; border-color: #fff; }
.pmatabs svg { width: 20px; height: 20px; }
main { position: relative; flex: 1; min-height: 0; overflow: hidden; }
main::after {
  content: "";
  position: absolute;
  inset: auto 0 0;
  height: 60px;
  background: linear-gradient(transparent, rgba(0, 0, 0, .1));
  pointer-events: none;
}
.content { margin: -27px 247px 0 243px; }
.card {
  position: relative;
  min-width: 0;
  margin: 0 0 22px;
  padding: 21px 21px 22px;
  border: 1px solid #aaa;
  border-radius: 4px;
  background: #eee;
  text-shadow: 0 1px 0 #fff;
  box-shadow: inset 1px 1px 2px #fff;
}
legend {
  height: 40px;
  margin-left: -14px;
  padding: 0 13px;
  border: 1px solid #aaa;
  border-radius: 2px;
  background: #fff;
  box-shadow: 3px 3px 15px #bbb;
  font-weight: 700;
  line-height: 38px;
}
.card p { margin: 0 0 21px; }
.card label { display: block; }
.card small { font-size: 15px; }
.box {
  display: block;
  width: 100%;
  height: 43px;
  margin: 10px 0 0;
  padding: 0 16px;
  border: 1px solid #ced4da;
  border-radius: 5px;
  background: #fff;
  color: #444;
  font: inherit;
  appearance: none;
}
input[type="file"] { margin: 11px 0 21px; padding: 0; line-height: 41px; }
input[type="file"]::file-selector-button {
  height: 41px;
  margin: 0 16px 0 0;
  padding: 0 16px;
  border: 0;
  border-right: 1px solid #ced4da;
  background: #e9ecef;
  color: #444;
  font: inherit;
}
.selectwrap { position: relative; }
.selectwrap svg { position: absolute; right: 18px; top: 13px; width: 17px; height: 17px; color: #343a40; }
.switch { height: 25px; display: flex; align-items: center; gap: 9px; }
.switch input {
  appearance: none;
  width: 33px;
  height: 17px;
  margin: 0;
  border-radius: 9px;
  background: radial-gradient(circle at 25px 50%, #fff 6px, transparent 7px), #3a7af0;
}
.help { margin: 5px 0 21px 42px; color: #6c757d; font-size: 15px; line-height: 22px; }
.number {
  display: block;
  width: 100%;
  height: 38px;
  margin-top: 10px;
  padding: 0 6px;
  border: 1px solid #aaa;
  border-radius: 2px;
  background: #fff;
  color: #444;
  font: inherit;
}
.format .box { margin-top: 0; }
.focus { border-color: #e4e4e4; box-shadow: 0 0 0 5px #e0e0e0; }
.inner { padding: 8px 16px 40px; border: 1px solid #d5d7d9; border-radius: 5px; color: #222; }
.popup {
  position: absolute;
  z-index: 2;
  top: -91px;
  left: 10px;
  right: 30px;
  margin: 0;
  padding: 7px 6px;
  list-style: none;
  border: 1px solid #4f4f4f;
  border-radius: 8px;
  background: #646464;
  box-shadow: inset 0 0 0 1px #777, 0 8px 28px rgba(0, 0, 0, .35);
  color: #e6e6e6;
  font: 16px/28px Inter, sans-serif;
  text-shadow: none;
}
.popup li { position: relative; padding-left: 24px; border-radius: 6px; }
.popup li[aria-selected] { background: #6896e6; color: #fff; }
.popup li svg { position: absolute; left: 6px; top: 7px; width: 14px; height: 14px; }
.console {
  position: absolute;
  left: 0;
  bottom: 0;
  height: 28px;
  display: flex;
  align-items: center;
  gap: 6px;
  padding: 0 4px 0 10px;
  border: 1px solid #aaa;
  border-width: 1px 1px 0 0;
  border-radius: 0 4px 0 0;
  background: #ccc;
}
.console svg { width: 17px; height: 17px; }

/* dock */
.desktop {
  position: relative;
  flex: none;
  height: 109px;
  padding: 5px 0 7px;
  background: linear-gradient(90deg, transparent 90%, rgba(60, 20, 20, .5)), linear-gradient(90deg, #000 48%, #222 58%, #301014 68%, #14202c 72%, #501820 80%, #1c1c24 88%, #1c1a1c 94%, #101014);
}
.wall {
  position: absolute;
  right: 0;
  top: 42px;
  color: #4a4a4a;
  font: 700 22px/26px "Liberation Sans", sans-serif;
}
.dock {
  position: relative;
  width: max-content;
  height: 97px;
  margin: 0 auto;
  display: flex;
  padding: 0 2px;
  border: 1px solid #4a4a4a;
  border-radius: 26px;
  background: linear-gradient(90deg, #191919 22%, #2a2727 26%, #1b1b28 31%, #1a1a28 35%, #1f1b1b 39%, #353330 47%, #45443e 58%, #484743 66%, #4e2a2e 71%, #3c3848 76%, #5a2f45 80%, #8c3c5c 83%, #8a3f5a 86%, #5a4a45 90%, #4e3028 94%, #482220);
  font-family: Inter, sans-serif;
}
.dock a { position: relative; width: 84px; display: grid; place-items: center; padding-bottom: 6px; }
.dock a svg { width: 63px; height: 63px; }
.dock .round svg { width: 78px; height: 78px; }
.dock .big svg { width: 70px; height: 70px; }
.dock .run::after {
  content: "";
  position: absolute;
  bottom: 2px;
  left: 39px;
  width: 5px;
  height: 5px;
  border-radius: 50%;
  background: #b5b5b5;
}
.dock b {
  position: absolute;
  top: 5px;
  right: 1px;
  min-width: 30px;
  height: 30px;
  padding: 0 2px;
  border-radius: 15px;
  background: #e0483e;
  color: #fff;
  font: 16px/30px Inter, sans-serif;
  text-align: center;
}
.sep { width: 2px; height: 72px; margin: 12px 18px 0; background: rgba(255, 255, 255, .25); }
```
